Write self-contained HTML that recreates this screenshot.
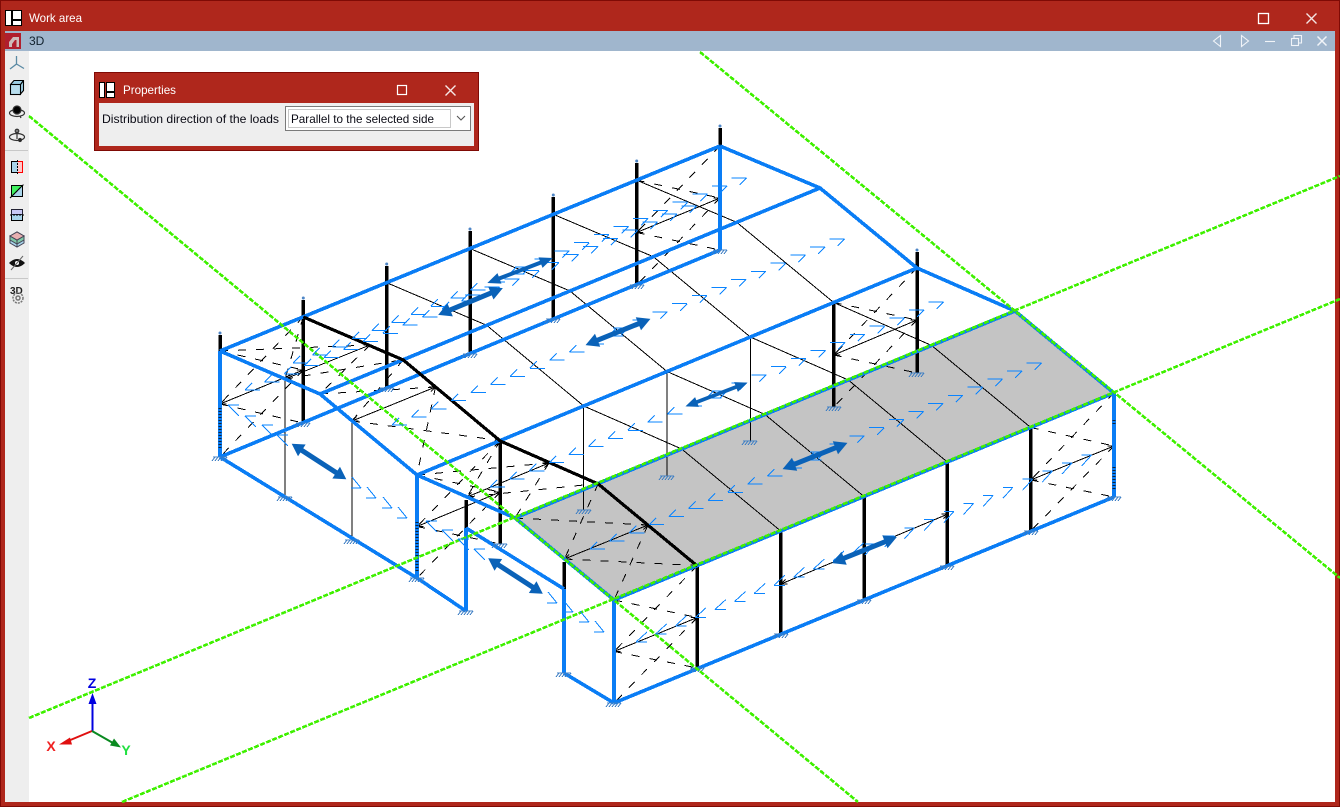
<!DOCTYPE html>
<html><head><meta charset="utf-8"><title>Work area</title>
<style>
html,body{margin:0;padding:0;background:#fff}
#w{position:relative;width:1340px;height:807px;overflow:hidden;background:#af271c;font-family:"Liberation Sans",sans-serif;font-size:12px}
svg{position:absolute;left:0;top:0}
</style></head><body><div id="w">
<svg width="1340" height="807" viewBox="0 0 1340 807" font-family="Liberation Sans, sans-serif">
<defs>
<path id="L" fill="none" d="M0 0h15m-15 0l7-7M19.7-8.1h15m-15 0l7-7M39.4-16.2h15m-15 0l7-7M59.1-24.3h15m-15 0l7-7M78.8-32.4h15m-15 0l7-7M98.5-40.5h15m-15 0l7-7M118.2-48.6h15m-15 0l7-7M137.9-56.7h15m-15 0l7-7M157.6-64.8h15m-15 0l7-7M177.3-72.9h15m-15 0l7-7M197-81h15m-15 0l7-7M216.7-89.1h15m-15 0l7-7"/>
<path id="R" fill="none" d="M0 0h-15m15 0l-7 7M19.7-8.1h-15m15 0l-7 7M39.4-16.2h-15m15 0l-7 7M59.1-24.3h-15m15 0l-7 7M78.8-32.4h-15m15 0l-7 7M98.5-40.5h-15m15 0l-7 7M118.2-48.6h-15m15 0l-7 7M137.9-56.7h-15m15 0l-7 7M157.6-64.8h-15m15 0l-7 7M177.3-72.9h-15m15 0l-7 7M197-81h-15m15 0l-7 7M216.7-89.1h-15m15 0l-7 7"/>
<path id="L2" fill="none" d="M0 0h11m-11 0l11-10M19.7-8.1h11m-11 0l11-10M39.4-16.2h11m-11 0l11-10M59.1-24.3h11m-11 0l11-10M78.8-32.4h11m-11 0l11-10M98.5-40.5h11m-11 0l11-10M118.2-48.6h11m-11 0l11-10M137.9-56.7h11m-11 0l11-10M157.6-64.8h11m-11 0l11-10M177.3-72.9h11m-11 0l11-10M197-81h11m-11 0l11-10M216.7-89.1h11m-11 0l11-10"/>
<path id="R2" fill="none" d="M0 0h-10m10 0l-10 11M19.7-8.1h-10m10 0l-10 11M39.4-16.2h-10m10 0l-10 11M59.1-24.3h-10m10 0l-10 11M78.8-32.4h-10m10 0l-10 11M98.5-40.5h-10m10 0l-10 11M118.2-48.6h-10m10 0l-10 11M137.9-56.7h-10m10 0l-10 11M157.6-64.8h-10m10 0l-10 11M177.3-72.9h-10m10 0l-10 11M197-81h-10m10 0l-10 11M216.7-89.1h-10m10 0l-10 11"/>
<polygon id="da" fill="#0a62b8" points="-35,0 -22,-7 -22,-2.5 22,-2.5 22,-7 35,0 22,7 22,2.5 -22,2.5 -22,7"/>
<path id="b" fill="none" stroke="#3f7fc4" stroke-width="1" d="M-7 0H7M-5 0l-3 4M-2 0l-3 4M1 0l-3 4M4 0l-3 4M7 0l-3 4"/>
<marker id="ah" markerUnits="userSpaceOnUse" markerWidth="8" markerHeight="8" refX="7" refY="4" orient="auto-start-reverse"><path d="M1 1.500L7 4L1 6.500" fill="none" stroke="#000" stroke-width="1"/></marker>
</defs>

<rect x="0" y="0" width="1340" height="807" fill="#af271c"/>
<rect x="0.5" y="0.5" width="1339" height="806" fill="none" stroke="#7f0a05"/>
<rect x="5" y="31" width="1330" height="20" fill="#a0b6cd"/>
<rect x="5" y="51" width="1330" height="751" fill="#fff"/>
<rect x="5" y="51" width="24" height="751" fill="#eee"/>

<!-- logo -->
<g stroke="#000" fill="#fff"><rect x="5.500" y="10.500" width="6" height="15"/><rect x="12.500" y="10.500" width="9" height="9"/><rect x="12.500" y="20.500" width="9" height="5"/></g>
<text x="29" y="22" fill="#fff" font-size="12" textLength="53" lengthAdjust="spacingAndGlyphs">Work area</text>
<rect x="1258.500" y="13.500" width="10" height="10" fill="none" stroke="#fff" stroke-width="1.300"/>
<path d="M1306.500 13.500l10 10m0-10l-10 10" stroke="#f4e4e2" stroke-width="1.400" fill="none"/>

<!-- doc icon -->
<rect x="5" y="33" width="16" height="16" fill="#b01f2e"/>
<path d="M9 47v-5l4-5h6v10h-2.500v-7h-1.500l-3 4v3z" fill="#cdbcbc"/>
<text x="29" y="45" fill="#10202c" font-size="12">3D</text>
<!-- sub buttons -->
<g fill="none" stroke="#f1f4f8" stroke-width="1.100">
<path d="M1220.500 35.500v11l-7-5.500z"/><path d="M1241.500 35.500v11l7-5.500z"/><path d="M1265 41.500h10"/>
<rect x="1291.500" y="38.500" width="7" height="7"/><path d="M1294 38v-2.500h7.500v7.500h-3"/>
<path d="M1317.500 36.500l9 9m0-9l-9 9" stroke-width="1.500"/>
</g>

<!-- toolbar icons -->
<g fill="none" stroke="#5a8aa4" stroke-width="1.300"><path d="M16.500 56v8l-6.500 5m6.500-5l7.500 4.500"/></g>
<g stroke="#000" stroke-width="1.100"><path d="M10.500 84.500l3.500-4h9.500v10l-3.500 4z" fill="#9ed0e6"/><rect x="10.500" y="84.500" width="10" height="10" fill="#b8deee"/><path d="M20.500 84.500l3-4" /></g>
<g fill="none" stroke="#333" stroke-width="1.200"><ellipse cx="17" cy="113" rx="7.500" ry="3.500"/><circle cx="17" cy="110" r="4" fill="#000"/><path d="M20 116l1 2"/></g>
<g fill="none" stroke="#333" stroke-width="1.200"><ellipse cx="17" cy="137" rx="7.500" ry="3.500"/><path d="M17 129v10"/><circle cx="17" cy="131" r="1.800"/><circle cx="20" cy="140" r="1.500" fill="#222"/></g>
<rect x="5" y="150" width="23" height="1" fill="#c8c8c8"/>
<g stroke="#000"><rect x="11.500" y="161.500" width="11" height="11" fill="#a8d4ea"/><path d="M17.500 161.500h5v11h-5" fill="#ffc8c8" stroke="#f00"/><path d="M17.500 160v14" stroke-dasharray="2 1"/></g>
<g stroke="#000"><rect x="11.500" y="185.500" width="11" height="11" fill="#a8d4ea"/><path d="M11.500 185.500h11l-11 11z" fill="#40f060"/><path d="M10 198l14-14" stroke-dasharray="3 1"/></g>
<g stroke="#000"><rect x="11.500" y="209.500" width="11" height="11" fill="#a8d4ea"/><rect x="11.500" y="209.500" width="11" height="5" fill="#c8c8f4" stroke="#223"/><path d="M10 215h14" stroke-dasharray="2 1"/></g>
<g stroke="#445"><path d="M10 236l7-4 7 4v7l-7 4-7-4z" fill="#a8d4ea"/><path d="M10 240l7 4 7-4v-4l-7 4-7-4z" fill="#7fc8a8"/><path d="M10 236l7-4 7 4-7 4z" fill="#e8b0b0"/><path d="M17 240v7" /></g>
<g><path d="M9 263q8-8 16 0q-8 8-16 0z" fill="#111"/><circle cx="17" cy="263" r="2" fill="#fff"/><path d="M11 270l12-14" stroke="#666" stroke-width="1"/></g>
<rect x="5" y="278" width="23" height="1" fill="#c8c8c8"/>
<text x="10" y="294" font-size="10" font-weight="bold" fill="#222">3D</text>
<g fill="none" stroke="#777" stroke-width="1.500"><circle cx="18" cy="298" r="5" stroke-dasharray="2 1"/><circle cx="18" cy="298" r="2"/></g>

<!-- canvas drawing -->
<polygon points="515,518 1015,311 1114,393 614,600" fill="#c4c4c4"/>

<g shape-rendering="crispEdges">
<!-- thin frames -->
<g fill="none" stroke="#000" stroke-width="1">
<path d="M386.700 282.700L486.700 325.300L583.700 406L681.700 449L780.700 531"/>
<path d="M470 248.500L570 291L667 371.500L765 414.500L864 496.500"/>
<path d="M553.300 214.300L653.300 256.700L750.300 337L848.300 380L947.300 462"/>
<path d="M636.700 180.200L736.700 222.300L833.700 302.500L931.700 345.500L1030.700 427.500"/>
<path d="M285 379V497M352 421V540M583.700 406V510M667 371.500V476M750.300 337V441"/>
<g marker-start="url(#ah)" marker-end="url(#ah)">
<path d="M614 651.500L697.300 617.500"/><path d="M1030.700 480L1114 446"/><path d="M220 404L303.300 370"/><path d="M636.700 232.500L720 198"/><path d="M417 526.500L500.300 492"/><path d="M833.700 355L917 320"/>
<path d="M285 379L370 345"/><path d="M352 421L435.500 387"/><path d="M467 497L549 463"/><path d="M564.500 559L648 525"/><path d="M781 584L948 514"/>
</g>
</g>

<!-- dashed bracing -->
<g fill="none" stroke="#000" stroke-width="1" stroke-dasharray="8 10">
<path d="M614 600L697.300 617.500M697.300 565.500L614 651.500M614 651.500L697.300 668M697.300 617.500L614 703"/>
<path d="M1030.700 427.500L1114 446M1114 393L1030.700 480M1030.700 480L1114 497M1114 446L1030.700 531"/>
<path d="M220 351L303.300 370M303.300 316.800L220 404M220 404L303.300 423M303.300 370L220 457"/>
<path d="M636.700 180.200L720 198M720 146L636.700 232.500M636.700 232.500L720 250M720 198L636.700 285"/>
<path d="M417 475L500.300 492M500.300 440.500L417 526.500M417 526.500L500.300 544M500.300 492L417 578"/>
<path d="M833.700 302.500L917 320M917 268L833.700 355M833.700 355L917 373M917 320L833.700 407"/>
<path d="M220 351L370 345M303.300 316.800L285 379M285 379L403.300 359.700M370 345L320 394"/>
<path d="M320 394L435.500 387M403.300 359.700L352 421M352 421L500.300 440.500M435.500 387L417 475"/>
<path d="M417 475L549 463M500.300 440.500L467 497M467 497L598.300 483.500M549 463L515 518"/>
<path d="M515 518L648 525M598.300 483.500L564.500 559M564.500 559L697.300 565.500M648 525L614 600"/>
</g>

<!-- black thick columns -->
<g fill="none" stroke="#000" stroke-width="3.500">
<path d="M220 335V351M303.300 300V423M386.700 266V388.500M470 231V354M553.300 197V319.500M636.700 163V285M720 128V146"/>
<path d="M500.300 441V544M833.700 303V407M917 252V373"/>
<path d="M697.300 566V668M780.700 531V634M864 497V600M947.300 462V566M1030.700 428V531"/>
<path d="M466 500V528M564 562V589"/>
</g>
<!-- blue frame -->
<g fill="none" stroke="#0a7df5" stroke-width="3.600">
<path d="M220 351L720 146"/><path d="M320 394L820 188"/><path d="M417 475L917 268"/>
<path d="M515 518L1015 311"/><path d="M614 600L1114 393"/>
<path d="M220 457L720 250"/><path d="M614 703L1114 497"/>
<path d="M220 351L320 394L417 475L515 518L614 600"/>
<path d="M720 146L820 188L917 268L1015 311L1114 393"/>
<path d="M220 351V457M720 146V250M417 475V578M614 600V703M1114 393V497M466 528V611M564 589V673"/>
<path d="M220 457L417 578L466 611M466 528L564 589M564 673L614 703"/>
</g>
<!-- black frame over blue -->
<path d="M303.300 317L403.300 360L500.300 441L598.300 484L697.300 566" fill="none" stroke="#000" stroke-width="3.200"/>
<!-- ladder ticks -->
<g fill="none" stroke="#123" stroke-width="3" stroke-dasharray="1 2">
<path d="M220 408V450M417 522V572M1114 420V425M1114 467V490"/>
</g>

<!-- bases -->
<g>
<use href="#b" x="220" y="457"/><use href="#b" x="303" y="423"/><use href="#b" x="387" y="388"/><use href="#b" x="470" y="354"/><use href="#b" x="553" y="319"/><use href="#b" x="637" y="285"/><use href="#b" x="720" y="250"/>
<use href="#b" x="285" y="497"/><use href="#b" x="352" y="540"/><use href="#b" x="417" y="578"/><use href="#b" x="466" y="611"/><use href="#b" x="500" y="544"/><use href="#b" x="564" y="673"/>
<use href="#b" x="584" y="510"/><use href="#b" x="667" y="476"/><use href="#b" x="750" y="441"/><use href="#b" x="834" y="407"/><use href="#b" x="917" y="373"/>
<use href="#b" x="614" y="703"/><use href="#b" x="697" y="668"/><use href="#b" x="781" y="634"/><use href="#b" x="864" y="600"/><use href="#b" x="947" y="566"/><use href="#b" x="1031" y="531"/><use href="#b" x="1114" y="497"/>
</g>

<!-- green lines -->
<g fill="none" stroke="#3ff000" stroke-width="2.600" stroke-dasharray="5 1.500">
<path d="M29 116L858 802"/><path d="M700 52L1340 578"/><path d="M29 718L1340 176"/><path d="M122 802L1340 299"/>
</g>

<!-- load chevrons -->
<g stroke="#0a84ff" stroke-width="1">
<use href="#L" x="293" y="363"/><use href="#R" x="530" y="267"/>
<use href="#L" x="245" y="390"/><use href="#R" x="480" y="295"/>
<use href="#L" x="392" y="425"/><use href="#R" x="628" y="328"/>
<use href="#L" x="490" y="487"/><use href="#R" x="727" y="391"/>
<use href="#L" x="590" y="549"/><use href="#R" x="825" y="452"/>
<use href="#L2" x="636" y="642"/><use href="#R2" x="875" y="544"/>
<path fill="none" d="M228 405h11m-11 0l11 11M245 416h11m-11 0l11 11M262 425h11m-11 0l11 11M277 435h11m-11 0l11 11"/>
<path fill="none" d="M361 488h-10m10 0l-9-11M376 498h-10m10 0l-9-11M392 508h-10m10 0l-9-11M407 518h-10m10 0l-9-11"/>
<path fill="none" d="M426 521h11m-11 0l11 11M442 530h11m-11 0l11 11M458 539h11m-11 0l11 11M474 549h11m-11 0l11 11"/>
<path fill="none" d="M557 603h-10m10 0l-9-11M573 612h-10m10 0l-9-11M589 622h-10m10 0l-9-11M604 632h-10m10 0l-9-11"/>
</g>
</g>
<!-- knobs -->
<g fill="#4f86c6"><circle cx="220" cy="333" r="1.500"/><circle cx="303.300" cy="298" r="1.500"/><circle cx="386.700" cy="264" r="1.500"/><circle cx="470" cy="229" r="1.500"/><circle cx="553.300" cy="195" r="1.500"/><circle cx="636.700" cy="161" r="1.500"/><circle cx="720" cy="126" r="1.500"/><circle cx="917" cy="250" r="1.500"/></g>

<!-- double arrows -->
<use href="#da" transform="translate(470.500 301.500) rotate(-22.500)"/>
<use href="#da" transform="translate(520 270.500) rotate(-21) scale(1 .8)"/>
<use href="#da" transform="translate(618 332) rotate(-22)"/>
<use href="#da" transform="translate(716.500 394.500) rotate(-21) scale(.95 .75)"/>
<use href="#da" transform="translate(815 456) rotate(-22)"/>
<use href="#da" transform="translate(864.500 550) rotate(-22)"/>
<use href="#da" transform="translate(319 461.500) rotate(33) scale(.93 1)"/>
<use href="#da" transform="translate(515.500 576) rotate(33) scale(.93 1)"/>

<!-- axes -->
<path d="M92.500 731V700" stroke="#0000e0" stroke-width="2"/><path d="M92.500 693l-4 11h8z" fill="#0000e0"/>
<path d="M92 731L68 741" stroke="#e01010" stroke-width="2"/><path d="M59 744.500l11-7 2 7z" fill="#e01010"/>
<path d="M92 731L113 743" stroke="#0a8a20" stroke-width="2"/><path d="M121 747.500l-11-2 4-7z" fill="#0a8a20"/>
<text x="92" y="688" text-anchor="middle" font-size="14" font-weight="bold" fill="#0000e0">Z</text>
<text x="51" y="751" text-anchor="middle" font-size="14" font-weight="bold" fill="#f02020">X</text>
<text x="126" y="755" text-anchor="middle" font-size="14" font-weight="bold" fill="#20e040">Y</text>

<!-- Properties window -->
<rect x="94.500" y="72.500" width="384" height="78" fill="#af271c" stroke="#7f0a05"/>
<rect x="99" y="103" width="375" height="43" fill="#eee"/>
<g stroke="#000" fill="#fff"><rect x="99.500" y="82.500" width="5" height="15"/><rect x="106.500" y="82.500" width="8" height="9"/><rect x="106.500" y="92.500" width="8" height="5"/></g>
<text x="123" y="94" fill="#fff" font-size="12" textLength="53" lengthAdjust="spacingAndGlyphs">Properties</text>
<rect x="397.500" y="85.500" width="9" height="9" fill="none" stroke="#fff" stroke-width="1.200"/>
<path d="M445.500 85.500l10 10m0-10l-10 10" stroke="#f6e8e6" stroke-width="1.400" fill="none"/>
<text x="102" y="123" fill="#0a0a14" font-size="12" textLength="177" lengthAdjust="spacingAndGlyphs">Distribution direction of the loads</text>
<rect x="285.500" y="106.500" width="185" height="24" fill="#fff" stroke="#7a7a7a"/>
<rect x="288.500" y="109.500" width="162" height="18" fill="#fff" stroke="#c8c8c8"/>
<text x="291" y="123" fill="#0a0a14" font-size="12" textLength="143" lengthAdjust="spacingAndGlyphs">Parallel to the selected side</text>
<path d="M457 116l4 4 4-4" fill="none" stroke="#555" stroke-width="1.100"/>
</svg>
</div></body></html>
